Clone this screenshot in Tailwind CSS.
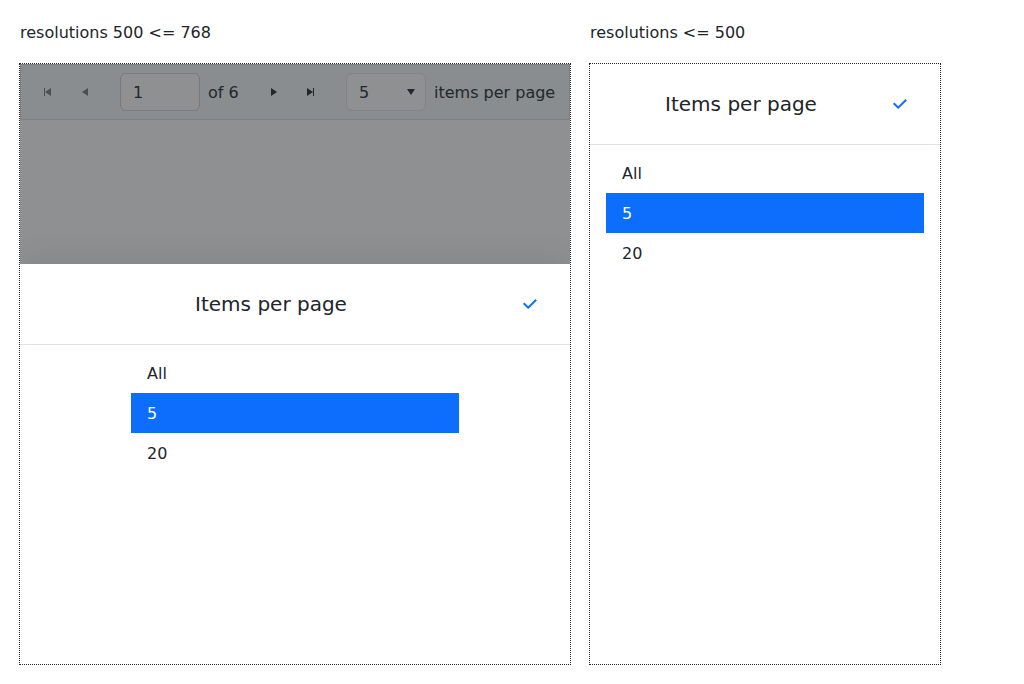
<!DOCTYPE html>
<html lang="en">
<head>
<meta charset="utf-8">
<title>Responsive pager</title>
<script src="https://cdn.jsdelivr.net/npm/@tailwindcss/browser@4"></script>
</head>
<body class="min-h-screen bg-white font-['DejaVu_Sans',sans-serif] text-base text-[#212529]">
<main class="flex min-h-screen gap-5 pl-5 pt-5 pb-5">
  <section class="w-[550px]">
    <p class="mb-[18px] leading-[26px]">resolutions 500 &lt;= 768</p>
    <div class="flex h-[600px] flex-col overflow-hidden outline outline-dotted outline-[#212529]">
      <div class="h-[200px] shrink-0 bg-[#8f9092]">
        <div class="flex h-14 items-center border border-[#7d7f80] bg-[#898d8f] pl-2 text-[#22272b]">
          <div class="flex w-[38px] justify-center"><svg class="size-4" viewBox="0 0 16 16" fill="#4a4f52"><path d="M4 4h1v8H4zM5 8l6-4v8z"/></svg></div>
          <div class="flex w-[38px] justify-center"><svg class="size-4" viewBox="0 0 16 16" fill="#4a4f52"><path d="M4 8l6-4v8z"/></svg></div>
          <div class="ml-[15px] flex h-[38px] w-20 items-center rounded-md border border-[#797a7c] bg-[#8f9092] pl-3 pt-0.5">1</div>
          <span class="ml-2 w-[46px] pt-0.5">of 6</span>
          <div class="flex w-[38px] justify-center"><svg class="size-4" viewBox="0 0 16 16" fill="#22272b"><path d="M6 4l6 4-6 4z"/></svg></div>
          <div class="flex w-[38px] justify-center"><svg class="size-4" viewBox="0 0 16 16" fill="#22272b"><path d="M4 4l6 4-6 4zM10 4h1v8h-1z"/></svg></div>
          <div class="ml-4 flex h-[38px] w-20 items-center justify-between rounded-md border border-[#818384] bg-[#8f9092] pl-3 pr-1.5"><span class="pt-0.5">5</span><svg class="size-4" viewBox="0 0 16 16" fill="#22272b"><path d="M4 5h8l-4 6z"/></svg></div>
          <span class="ml-2 whitespace-nowrap pt-0.5">items per page</span>
        </div>
      </div>
      <div class="grow bg-white shadow-[0_-5px_30px_rgba(0,0,0,0.08)]">
        <div class="flex h-[81px] items-center border-b border-[#dee2e6]">
          <h2 class="w-[502px] text-center text-xl">Items per page</h2>
          <svg class="size-4" viewBox="0 0 16 16" fill="none" stroke="#0d6efd" stroke-width="2"><path d="M1.7 7.2l4.5 4.5 8-8"/></svg>
        </div>
        <ul class="mx-auto mt-2 w-[328px] leading-6">
          <li class="px-4 pt-[9px] pb-[7px]">All</li>
          <li class="bg-[#0d6efd] px-4 pt-[9px] pb-[7px] text-white">5</li>
          <li class="px-4 pt-[9px] pb-[7px]">20</li>
        </ul>
      </div>
    </div>
  </section>
  <section class="w-[350px]">
    <p class="mb-[18px] leading-[26px]">resolutions &lt;= 500</p>
    <div class="h-[600px] bg-white outline outline-dotted outline-[#212529]">
      <div class="flex h-[81px] items-center border-b border-[#dee2e6]">
        <h2 class="w-[302px] text-center text-xl">Items per page</h2>
        <svg class="size-4" viewBox="0 0 16 16" fill="none" stroke="#0d6efd" stroke-width="2"><path d="M1.7 7.2l4.5 4.5 8-8"/></svg>
      </div>
      <ul class="mx-4 mt-2 leading-6">
        <li class="px-4 pt-[9px] pb-[7px]">All</li>
        <li class="bg-[#0d6efd] px-4 pt-[9px] pb-[7px] text-white">5</li>
        <li class="px-4 pt-[9px] pb-[7px]">20</li>
      </ul>
    </div>
  </section>
</main>
</body>
</html>
